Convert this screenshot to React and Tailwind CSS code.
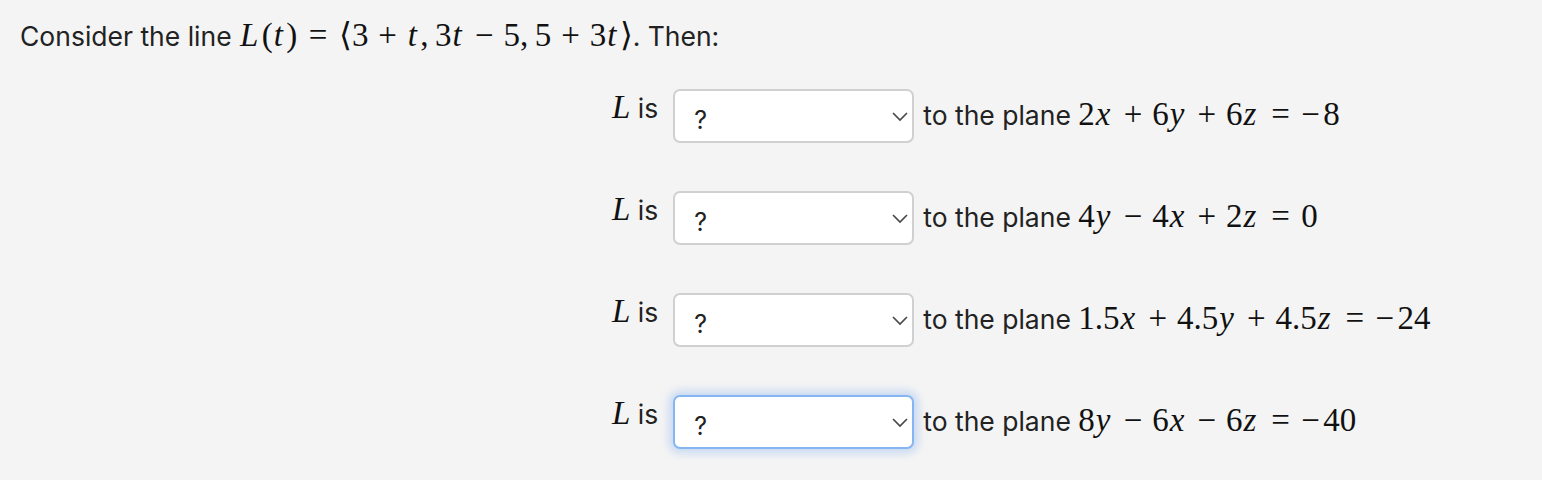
import { useState } from "react";

// math tokens: n = upright, v = italic variable, b = binary op, r = relation, u = unary, p = punct
const rows = [
  { plane: [["n", "2"], ["v", "x"], ["b", "+"], ["n", "6"], ["v", "y"], ["b", "+"], ["n", "6"], ["v", "z"], ["r", "="], ["u", "−"], ["n", "8"]], focus: false },
  { plane: [["n", "4"], ["v", "y"], ["b", "−"], ["n", "4"], ["v", "x"], ["b", "+"], ["n", "2"], ["v", "z"], ["r", "="], ["n", "0"]], focus: false },
  { plane: [["n", "1.5"], ["v", "x"], ["b", "+"], ["n", "4.5"], ["v", "y"], ["b", "+"], ["n", "4.5"], ["v", "z"], ["r", "="], ["u", "−"], ["n", "24"]], focus: false },
  { plane: [["n", "8"], ["v", "y"], ["b", "−"], ["n", "6"], ["v", "x"], ["b", "−"], ["n", "6"], ["v", "z"], ["r", "="], ["u", "−"], ["n", "40"]], focus: true },
];

const line = [
  ["v", "L"], ["n", "("], ["v", "t"], ["n", ")"], ["r", "="], ["n", "⟨"], ["n", "3"], ["b", "+"], ["v", "t"], ["p", ","],
  ["n", "3"], ["v", "t"], ["b", "−"], ["n", "5"], ["p", ","], ["n", "5"], ["b", "+"], ["n", "3"], ["v", "t"], ["n", "⟩"],
];

function Math({ parts }) {
  return (
    <span className="font-['Liberation_Serif',serif] text-[33px] whitespace-nowrap text-[#111]">
      {parts.map(([k, s], i) => {
        if (k === "v") return <i key={i} className="pl-[0.03em] pr-[0.1em]">{s}</i>;
        if (k === "b") return <span key={i} className="mx-[0.3em]">{s}</span>;
        if (k === "r") return <span key={i} className="mx-[0.35em]">{s}</span>;
        if (k === "u") return <span key={i} className="pr-[0.1em]">{s}</span>;
        if (k === "p") return <span key={i} className="mr-[0.2em]">{s}</span>;
        return <span key={i}>{s}</span>;
      })}
    </span>
  );
}

function Select({ focus }) {
  const [val, setVal] = useState("?");
  return (
    <div
      className={`relative w-[241px] h-[54px] rounded-[7px] bg-white border-2 ${
        focus
          ? "border-[#86b6f2] shadow-[0_0_8px_4px_rgba(130,175,240,0.4)]"
          : "border-[#d0d0d0]"
      }`}
    >
      <select
        value={val}
        onChange={(e) => setVal(e.target.value)}
        className="appearance-none w-full h-full bg-transparent pl-[19px] pt-[10px] text-[25px] text-[#222] outline-none font-['Inter',sans-serif]"
      >
        <option>?</option>
        <option>parallel</option>
        <option>perpendicular</option>
        <option>neither</option>
      </select>
      <svg
        className="absolute right-[3px] top-[19px] pointer-events-none"
        width="18"
        height="12"
        viewBox="0 0 18 12"
      >
        <path d="M2 3 L9 10 L16 3" fill="none" stroke="#4a4a4a" strokeWidth="1.7" />
      </svg>
    </div>
  );
}

export default function App() {
  return (
    <div className="min-h-[480px] bg-[#f4f4f4] text-[#222] font-['Inter',sans-serif] text-[26.5px]">
      <div className="pl-[20px] pt-[16px] leading-[38px] whitespace-nowrap">
        Consider the line <Math parts={line} />. Then:
      </div>

      <div className="pl-[612px] pt-[34px] flex flex-col gap-[48px]">
        {rows.map((r, i) => (
          <div key={i} className="flex items-start">
            <div className="pt-[3px] leading-[30px] whitespace-pre">
              <span className="font-['Liberation_Serif',serif] italic text-[33px] text-[#111]">L</span> is
            </div>
            <div className="ml-[15px]">
              <Select focus={r.focus} />
            </div>
            <div className="ml-[9px] pt-[10px] leading-[30px] whitespace-pre">
              to the plane <Math parts={r.plane} />
            </div>
          </div>
        ))}
      </div>
    </div>
  );
}
